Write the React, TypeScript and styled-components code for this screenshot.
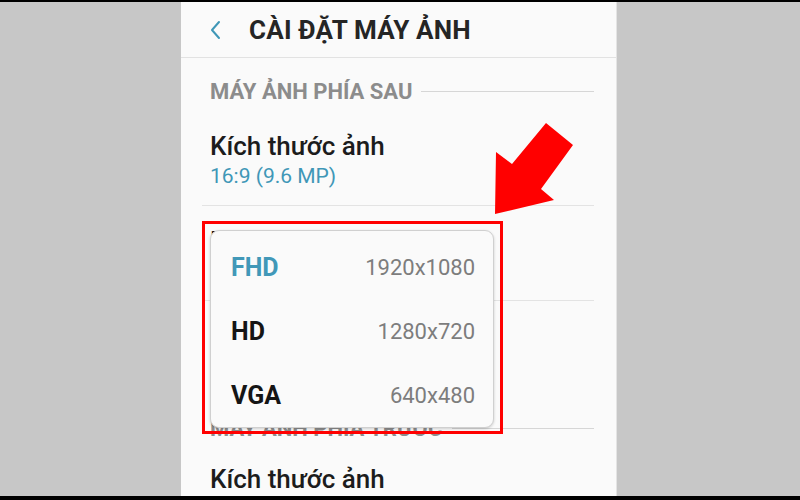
import React from "react";
import styled, { createGlobalStyle } from "styled-components";

const Global = createGlobalStyle`
  html, body { margin: 0; padding: 0; }
  body { width: 800px; height: 500px; overflow: hidden; background: #c7c7c7; font-family: Roboto, "Noto Sans", sans-serif; }
`;

const Frame = styled.div`
  width: 800px;
  height: 500px;
  box-sizing: border-box;
  border-top: 2px solid #000;
  border-bottom: 4px solid #000;
  display: flex;
  justify-content: flex-start;
  background: #c7c7c7;
  overflow: hidden;
`;

const Phone = styled.div`
  position: relative;
  margin-left: 181px;
  width: 435px;
  height: 100%;
  background: #fafafa;
  border-right: 1px solid #e4e4e4;
  display: flex;
  flex-direction: column;
  overflow: hidden;
`;

const Header = styled.div`
  height: 55px;
  display: flex;
  align-items: center;
  padding-left: 28px;
  gap: 26px;
  border-bottom: 1px solid #e2e2e2;
  flex-shrink: 0;
`;

const Title = styled.div`
  font-size: 26px;
  font-weight: 700;
  color: #252525;
  letter-spacing: 0.2px;
`;

const Body = styled.div`
  padding: 0 22px 0 29px;
  display: flex;
  flex-direction: column;
`;

const SectionHead = styled.div<{ $top: number }>`
  display: flex;
  align-items: center;
  gap: 9px;
  margin-top: ${(p) => p.$top}px;
  height: 24px;
  flex-shrink: 0;
  font-size: 22px;
  font-weight: 700;
  color: #8c8c8c;
  white-space: nowrap;
  &::after {
    content: "";
    flex: 1;
    height: 1px;
    background: #d6d6d6;
  }
`;

const Item = styled.div<{ $divider?: boolean; $h: number; $pad: number }>`
  height: ${(p) => p.$h}px;
  flex-shrink: 0;
  box-sizing: border-box;
  display: flex;
  flex-direction: column;
  justify-content: flex-start;
  padding-top: ${(p) => p.$pad}px;
  border-bottom: ${(p) => (p.$divider ? "1px solid #e3e3e3" : "none")};
  margin-left: -8px;
  padding-left: 8px;
`;

const ItemTitle = styled.div`
  font-size: 26px;
  font-weight: 500;
  color: #1c1c1c;
  line-height: 30px;
  white-space: nowrap;
`;

const ItemSub = styled.div`
  font-size: 21px;
  color: #3f97b7;
  line-height: 26px;
  margin-top: 2px;
`;

const Popup = styled.div`
  position: absolute;
  left: 29px;
  top: 228px;
  width: 284px;
  height: 198px;
  box-sizing: border-box;
  background: #fafafa;
  border: 1px solid #d0d0d0;
  border-radius: 9px;
  box-shadow: 0 1px 3px rgba(0, 0, 0, 0.18);
  display: flex;
  flex-direction: column;
  padding: 4px 18px 0 20px;
`;

const Option = styled.div`
  height: 64px;
  flex-shrink: 0;
  display: flex;
  align-items: center;
  justify-content: space-between;
`;

const OptName = styled.span<{ $active?: boolean }>`
  font-size: 25px;
  font-weight: 700;
  color: ${(p) => (p.$active ? "#4198b8" : "#151515")};
`;

const OptRes = styled.span`
  font-size: 22px;
  color: #7d7d7d;
`;

const RedBox = styled.div`
  position: absolute;
  left: 21px;
  top: 219px;
  width: 301px;
  height: 213px;
  box-sizing: border-box;
  border: 3px solid #ff0000;
  pointer-events: none;
`;

const Arrow = styled.svg`
  position: absolute;
  left: 0;
  top: 0;
  pointer-events: none;
`;

const Back = () => (
  <svg width="14" height="20" viewBox="0 0 14 20">
    <path d="M10 2 L3 10 L10 18" fill="none" stroke="#3f97b7" strokeWidth="2" strokeLinecap="round" strokeLinejoin="round" />
  </svg>
);

export default function App() {
  return (
    <>
      <Global />
      <Frame>
        <Phone>
          <Header>
            <Back />
            <Title>CÀI ĐẶT MÁY ẢNH</Title>
          </Header>
          <Body>
            <SectionHead $top={21}>MÁY ẢNH PHÍA SAU</SectionHead>
            <Item $divider $h={103} $pad={28}>
              <ItemTitle>Kích thước ảnh</ItemTitle>
              <ItemSub>16:9 (9.6 MP)</ItemSub>
            </Item>
            <Item $divider $h={95} $pad={20}>
              <ItemTitle>Kích thước video</ItemTitle>
              <ItemSub>FHD 1920x1080</ItemSub>
            </Item>
            <Item $h={115} $pad={20}>
              <ItemTitle>Ổn định video</ItemTitle>
              <ItemSub>Bật</ItemSub>
            </Item>
            <SectionHead $top={0}>MÁY ẢNH PHÍA TRƯỚC</SectionHead>
            <Item $h={54} $pad={24}>
              <ItemTitle>Kích thước ảnh</ItemTitle>
            </Item>
          </Body>
          <Popup>
            <Option>
              <OptName $active>FHD</OptName>
              <OptRes>1920x1080</OptRes>
            </Option>
            <Option>
              <OptName>HD</OptName>
              <OptRes>1280x720</OptRes>
            </Option>
            <Option>
              <OptName>VGA</OptName>
              <OptRes>640x480</OptRes>
            </Option>
          </Popup>
          <RedBox />
          <Arrow width="435" height="300" viewBox="181 0 435 300">
            <polygon points="495,212 496,150 512,162 546,121 573,143 541,187 554,198" fill="#ff0000" />
          </Arrow>
        </Phone>
      </Frame>
    </>
  );
}
